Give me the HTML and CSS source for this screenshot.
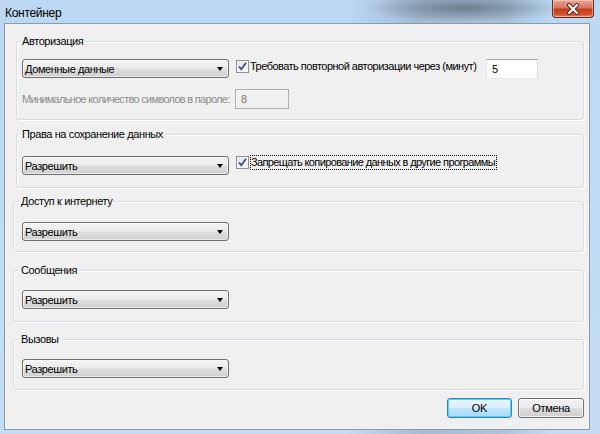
FILE: index.html
```html
<!DOCTYPE html>
<html lang="ru">
<head>
<meta charset="utf-8">
<title>Контейнер</title>
<link rel="stylesheet" href="styles.css">
</head>
<body>
<div class="window">
  <div class="titlebar">
    <span class="title">Контейнер</span>
    <div class="close">
      <svg width="16" height="12" viewBox="0 0 16 12"><path d="M4 2 L12 10 M12 2 L4 10" stroke="#5a2a22" stroke-width="4" stroke-linecap="round"/><path d="M4 2 L12 10 M12 2 L4 10" stroke="#ffffff" stroke-width="2" stroke-linecap="round"/></svg>
    </div>
  </div>
  <div class="client">
    <fieldset class="group g1">
      <legend>Авторизация</legend>
      <div class="row">
        <div class="combo"><span>Доменные данные</span><i class="arrow"></i></div>
        <label class="check c1"><span class="box"><svg width="11" height="11" viewBox="0 0 11 11"><path d="M2 5.5 L4.3 8.3 L9 1.8" fill="none" stroke="#3b5285" stroke-width="1.8"/></svg></span><span class="ctext">Требовать повторной авторизации через (минут)</span></label>
        <div class="input">5</div>
      </div>
      <div class="row row2">
        <span class="muted">Минимальное количество символов в пароле:</span>
        <div class="input disabled">8</div>
      </div>
    </fieldset>
    <fieldset class="group g2">
      <legend>Права на сохранение данных</legend>
      <div class="row">
        <div class="combo"><span>Разрешить</span><i class="arrow"></i></div>
        <label class="check c2"><span class="box"><svg width="11" height="11" viewBox="0 0 11 11"><path d="M2 5.5 L4.3 8.3 L9 1.8" fill="none" stroke="#3b5285" stroke-width="1.8"/></svg></span><span class="ctext focus">Запрещать копирование данных в другие программы</span></label>
      </div>
    </fieldset>
    <fieldset class="group g3">
      <legend>Доступ к интернету</legend>
      <div class="combo"><span>Разрешить</span><i class="arrow"></i></div>
    </fieldset>
    <fieldset class="group g4">
      <legend>Сообщения</legend>
      <div class="combo"><span>Разрешить</span><i class="arrow"></i></div>
    </fieldset>
    <fieldset class="group g5">
      <legend>Вызовы</legend>
      <div class="combo"><span>Разрешить</span><i class="arrow"></i></div>
    </fieldset>
    <div class="buttons">
      <button class="btn default">OK</button>
      <button class="btn">Отмена</button>
    </div>
  </div>
</div>
</body>
</html>
```
FILE: styles.css
```css
* { box-sizing: border-box; }
html, body { margin: 0; padding: 0; }
body {
  width: 600px;
  height: 434px;
  overflow: hidden;
  font-family: "Liberation Sans", Arial, sans-serif;
  font-size: 11px;
  letter-spacing: -0.5px;
  color: #000;
}
.window {
  width: 600px;
  height: 434px;
  background:
    radial-gradient(ellipse 100px 14px at 465px 8px, rgba(70,85,100,0.6), rgba(70,85,100,0) 100%),
    linear-gradient(90deg, rgba(185,214,242,0) 0%, rgba(185,214,242,0) 58%, rgba(120,140,160,0.4) 70%, rgba(130,150,170,0.35) 84%, rgba(185,214,242,0) 92%),
    linear-gradient(180deg, #bcd8f2 0%, #c4ddf4 100%);
  overflow: hidden;
}
.titlebar {
  height: 23px;
  display: flex;
  align-items: flex-start;
  justify-content: space-between;
}
.title {
  font-size: 12px;
  line-height: 14px;
  letter-spacing: -0.3px;
  margin: 6px 0 0 5px;
  color: #000;
}
.close {
  width: 42px;
  height: 18px;
  margin-right: 6px;
  border: 1px solid #6d2a1f;
  border-top: none;
  border-radius: 0 0 4px 4px;
  background: linear-gradient(180deg, #e9a796 0%, #d8755f 45%, #c23a1c 55%, #d0532f 85%, #e48a5c 100%);
  box-shadow: inset 0 0 0 1px rgba(255,220,210,0.5);
  display: flex;
  align-items: center;
  justify-content: center;
}
.client {
  margin-left: 4px;
  width: 586px;
  height: 407px;
  background: #f0f0f0;
  border: 1px solid #8c9aaa;
  display: flex;
  flex-direction: column;
}
.group {
  margin: 0 5px 0 11px;
  border: 1px solid #d5dfe5;
  border-radius: 3px;
  box-shadow: inset 1px 1px 0 #fff, 1px 1px 0 #fff;
  min-width: 0;
}
.group legend {
  padding: 0 2px;
  margin-left: -2px;
  font-size: 11px;
  line-height: 14px;
  letter-spacing: -0.4px;
}
.g1 { margin-top: 10px; padding: 11px 4px 10px 5px; }
.g2 { margin-top: 7px; padding: 15px 4px 12px 5px; }
.g3 { margin-top: 6px; margin-left: 8px; padding: 14px 4px 10px 8px; }
.g4 { margin-top: 11px; margin-left: 8px; padding: 13px 4px 12px 8px; }
.g5 { margin-top: 10px; margin-left: 8px; padding: 13px 4px 11px 8px; }
.g3 legend, .g4 legend, .g5 legend { margin-left: -3px; }

.row { display: flex; align-items: flex-start; }
.row2 { margin-top: 10px; align-items: center; }

.combo {
  width: 207px;
  height: 19px;
  flex: none;
  border: 1px solid #707070;
  border-radius: 3px;
  background: linear-gradient(180deg, #f3f3f3 0%, #ececec 48%, #dedede 52%, #d0d0d0 100%);
  box-shadow: inset 0 0 0 1px rgba(255,255,255,0.55);
  display: flex;
  align-items: center;
  justify-content: space-between;
  padding: 0 5px 0 2px;
  line-height: 14px;
  letter-spacing: -0.4px;
}
.arrow {
  width: 0;
  height: 0;
  border-left: 3.5px solid transparent;
  border-right: 3.5px solid transparent;
  border-top: 4px solid #000;
}
.check {
  display: flex;
  align-items: center;
  gap: 1px;
  flex: none;
}
.c1 { margin-left: 7px; margin-top: 1px; width: 250px; height: 13px; }
.c2 { margin-left: 7px; margin-top: -1px; }
.box {
  width: 13px;
  height: 13px;
  flex: none;
  border: 1px solid #8e8f8f;
  background: linear-gradient(135deg, #dcdcdc 0%, #f4f4f4 60%, #ffffff 100%);
  box-shadow: inset 0 0 0 1px #f4f4f4;
  display: flex;
  align-items: center;
  justify-content: center;
}
.ctext { line-height: 13px; white-space: nowrap; }
.c1 .ctext { letter-spacing: -0.52px; }
.c2 .ctext { letter-spacing: -0.62px; }
.focus { border: 1px dotted #000; padding: 0 1px 0 0; }
.input {
  width: 52px;
  height: 20px;
  flex: none;
  background: #fff;
  border: 1px solid #abadb3;
  border-color: #abadb3 #dbdfe6 #e3e9ef #e2e3ea;
  padding: 0 5px;
  line-height: 18px;
  font-size: 11px;
}
.muted { color: #8d8d8d; width: 213px; flex: none; white-space: nowrap; letter-spacing: -0.7px; }
.input.disabled {
  width: 54px;
  background: #f0f0f0;
  border-color: #adb2b5;
  color: #7a7a7a;
}
.buttons {
  margin: 8px 5px 0 0;
  display: flex;
  justify-content: flex-end;
  gap: 6px;
}
.btn {
  font-family: inherit;
  font-size: 11px;
  letter-spacing: -0.3px;
  width: 66px;
  height: 20px;
  border: 1px solid #707070;
  border-radius: 3px;
  background: linear-gradient(180deg, #f2f2f2 0%, #ebebeb 48%, #dddddd 52%, #cfcfcf 100%);
  box-shadow: inset 0 0 0 1px rgba(255,255,255,0.7);
  padding: 0;
  color: #000;
}
.btn.default {
  width: 65px;
  border-color: #3c7fb1;
  background: linear-gradient(180deg, #eaf6fd 0%, #d9f0fc 48%, #bee6fd 52%, #a7d9f5 100%);
  box-shadow: inset 0 0 0 1px #48d8fb;
}
```
